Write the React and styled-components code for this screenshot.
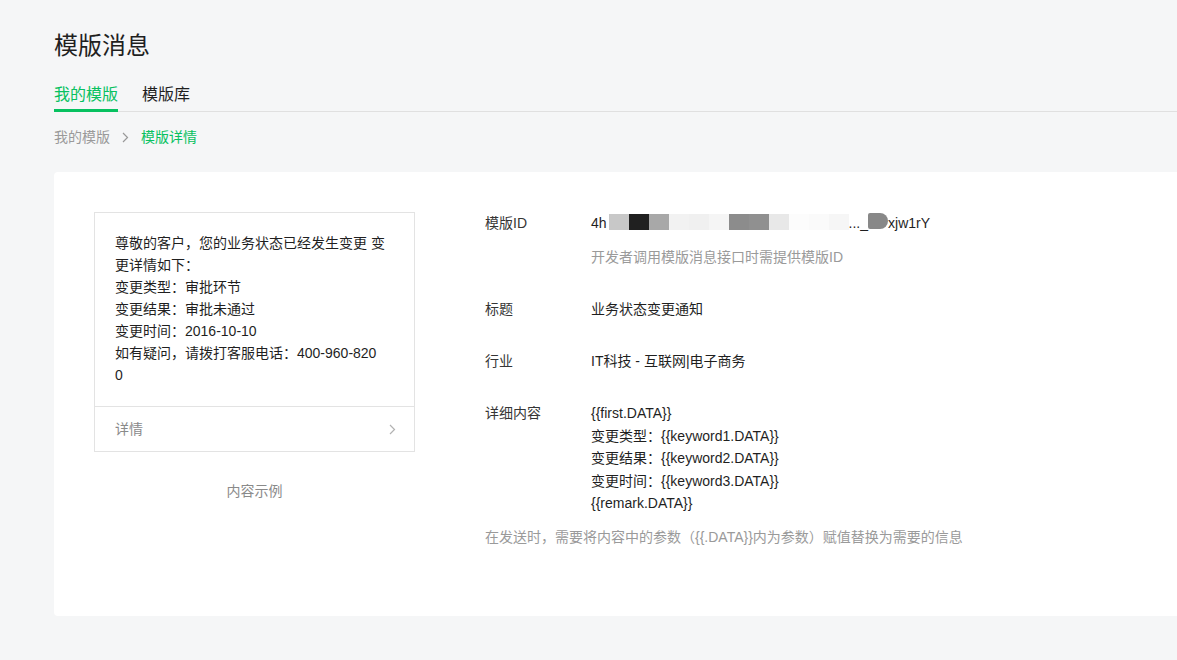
import styled, { createGlobalStyle } from "styled-components";

const GlobalStyle = createGlobalStyle`
  html, body {
    margin: 0;
    padding: 0;
    background: #f5f6f7;
    overflow: hidden;
  }
  body {
    font-family: "Liberation Sans", "Noto Sans CJK SC", sans-serif;
    color: #353535;
  }
`;

const previewLines = [
  "尊敬的客户，您的业务状态已经发生变更 变更详情如下：",
  "变更类型：审批环节",
  "变更结果：审批未通过",
  "变更时间：2016-10-10",
  "如有疑问，请拨打客服电话：400-960-820",
  "0",
];

const detailLines = [
  "{{first.DATA}}",
  "变更类型：{{keyword1.DATA}}",
  "变更结果：{{keyword2.DATA}}",
  "变更时间：{{keyword3.DATA}}",
  "{{remark.DATA}}",
];

const mosaic = [
  "#c8c8c8", "#202020", "#a8a8a8", "#f2f2f2", "#f0f0f0",
  "#f5f5f5", "#8c8c8c", "#909090", "#e8e8e8", "#fcfcfc",
  "#fafafa", "#f6f6f6",
];

function Chevron({ color = "#999" }) {
  return (
    <svg width="7" height="11" viewBox="0 0 7 11">
      <path d="M1 1l4.5 4.5L1 10" fill="none" stroke={color} strokeWidth="1.2" />
    </svg>
  );
}

export default function App() {
  return (
    <Page>
      <GlobalStyle />
      <Title>模版消息</Title>
      <Tabs>
        <Tab $active>我的模版</Tab>
        <Tab>模版库</Tab>
      </Tabs>
      <Crumbs>
        <CrumbLink>我的模版</CrumbLink>
        <Chevron />
        <CrumbCurrent>模版详情</CrumbCurrent>
      </Crumbs>
      <Card>
        <PreviewCol>
          <Preview>
            <PreviewBody>
              {previewLines.map((l) => (
                <div key={l}>{l}</div>
              ))}
            </PreviewBody>
            <PreviewFoot>
              <span>详情</span>
              <Chevron color="#b2b2b2" />
            </PreviewFoot>
          </Preview>
          <Caption>内容示例</Caption>
        </PreviewCol>
        <Info>
          <Row>
            <Label>模版ID</Label>
            <Value>
              <IdLine>
                <span>4h</span>
                <Mosaic>
                  {mosaic.map((c, i) => (
                    <Block key={i} style={{ background: c }} />
                  ))}
                </Mosaic>
                <span>..._</span>
                <Blob />
                <span>xjw1rY</span>
              </IdLine>
              <Hint>开发者调用模版消息接口时需提供模版ID</Hint>
            </Value>
          </Row>
          <Row>
            <Label>标题</Label>
            <Value>业务状态变更通知</Value>
          </Row>
          <Row>
            <Label>行业</Label>
            <Value>IT科技 - 互联网|电子商务</Value>
          </Row>
          <Row>
            <Label>详细内容</Label>
            <Value $dense>
              {detailLines.map((l) => (
                <div key={l}>{l}</div>
              ))}
            </Value>
          </Row>
          <Note>在发送时，需要将内容中的参数（{"{{.DATA}}"}内为参数）赋值替换为需要的信息</Note>
        </Info>
      </Card>
    </Page>
  );
}

const Page = styled.div`
  padding: 30px 0 0 54px;
  box-sizing: border-box;
  height: 660px;
`;

const Title = styled.h1`
  margin: 0;
  font-size: 24px;
  line-height: 32px;
  font-weight: 400;
  color: #1f1f1f;
`;

const Tabs = styled.div`
  display: flex;
  gap: 24px;
  margin-top: 21px;
  border-bottom: 1px solid #e0e0e0;
`;

const Tab = styled.div`
  position: relative;
  font-size: 16px;
  line-height: 24px;
  padding-bottom: 4px;
  color: ${(p) => (p.$active ? "#07c160" : "#1f1f1f")};

  &::after {
    content: "";
    display: ${(p) => (p.$active ? "block" : "none")};
    position: absolute;
    left: 0;
    right: 0;
    bottom: -1px;
    height: 3px;
    background: #07c160;
  }
`;

const Crumbs = styled.div`
  display: flex;
  align-items: center;
  gap: 12px;
  margin-top: 14px;
  font-size: 14px;
  line-height: 22px;
`;

const CrumbLink = styled.span`
  color: #9a9a9a;
`;

const CrumbCurrent = styled.span`
  color: #07c160;
`;

const Card = styled.div`
  display: flex;
  gap: 70px;
  margin-top: 24px;
  height: 444px;
  box-sizing: border-box;
  padding: 40px 0 0 40px;
  background: #fff;
  border-radius: 4px 0 0 4px;
`;

const PreviewCol = styled.div`
  width: 321px;
  display: flex;
  flex-direction: column;
  align-items: center;
`;

const Preview = styled.div`
  width: 100%;
  box-sizing: border-box;
  border: 1px solid #e3e3e3;
  font-size: 14px;
  line-height: 22px;
  color: #1f1f1f;
`;

const PreviewBody = styled.div`
  padding: 19px 20px 20px 20px;
  border-bottom: 1px solid #e3e3e3;
`;

const PreviewFoot = styled.div`
  display: flex;
  align-items: center;
  justify-content: space-between;
  height: 44px;
  padding: 0 18px 0 20px;
  color: #8a8a8a;
`;

const Caption = styled.div`
  margin-top: 28px;
  font-size: 14px;
  line-height: 22px;
  color: #8a8a8a;
`;

const Info = styled.div`
  display: flex;
  flex-direction: column;
  gap: 30px;
  font-size: 14px;
  line-height: 22px;
`;

const Row = styled.div`
  display: flex;
`;

const Label = styled.div`
  width: 106px;
  flex-shrink: 0;
  color: #353535;
`;

const Value = styled.div`
  color: #1f1f1f;
  line-height: ${(p) => (p.$dense ? "22.5px" : "22px")};
`;

const IdLine = styled.div`
  display: flex;
  align-items: center;
`;

const Mosaic = styled.div`
  display: flex;
  height: 16px;
  margin: -2px 0 0 2px;
`;

const Block = styled.span`
  width: 20px;
  height: 16px;
`;

const Blob = styled.span`
  width: 20px;
  height: 16px;
  margin-top: -4px;
  background: #888;
  border-radius: 2px 8px 8px 2px;
`;

const Hint = styled.div`
  margin-top: 12px;
  color: #9a9a9a;
`;

const Note = styled.div`
  margin-top: -19px;
  color: #9a9a9a;
`;
